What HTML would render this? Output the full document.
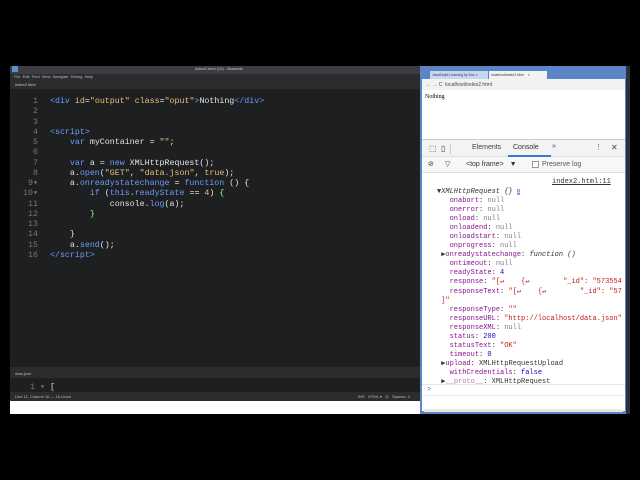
<!DOCTYPE html>
<html><head><style>
*{margin:0;padding:0;box-sizing:border-box}
body{width:640px;height:480px;background:#000;position:relative;overflow:hidden;font-family:"Liberation Sans",sans-serif}
.a{position:absolute}
.code{font-family:"Liberation Mono",monospace;font-size:8.3px;line-height:10.27px;white-space:pre;color:#e4e4e4}
.ln{color:#777;text-align:right;width:28px}
.t{color:#6c9ef8}.s{color:#e6c07b}.k{color:#6c9ef8}.v{color:#ddd}
.con{font-family:"Liberation Mono",monospace;font-size:7px;line-height:9.05px;white-space:pre;color:#333}
.p{color:#881391}.n{color:#808080}.st{color:#c41a16}.nu{color:#1c00cf}
</style></head><body>
<!-- editor -->
<div class="a" style="left:10px;top:66px;width:412px;height:8px;background:#3b3d40"></div>
<div class="a" style="left:12px;top:66px;width:6px;height:6px;background:#5a8fd0"></div>
<div class="a" style="left:195px;top:66px;font-size:4px;color:#ccc">index2.html (13) - Brackets</div>
<div class="a" style="left:10px;top:74px;width:412px;height:7px;background:#2b2c2e;font-size:4px;color:#bbb;padding-left:4px;line-height:6px">File&nbsp; Edit&nbsp; Find&nbsp; View&nbsp; Navigate&nbsp; Debug&nbsp; Help</div>
<div class="a" style="left:10px;top:81px;width:412px;height:8px;background:#2b2c2e;font-size:4px;color:#ccc;padding-left:5px;line-height:7px">index2.html</div>
<div class="a" style="left:10px;top:89px;width:412px;height:278px;background:#1d1f21"></div>
<div class="a code ln" style="left:10px;top:97px">1
2
3
4
5
6
7
8
9▾
10▾
11
12
13
14
15
16</div>
<div class="a code" style="left:50px;top:97px"><span class="t">&lt;div</span> <span class="s">id</span>=<span class="s">"output"</span> <span class="s">class</span>=<span class="s">"oput"</span><span class="t">&gt;</span>Nothing<span class="t">&lt;/div&gt;</span>


<span class="t">&lt;script&gt;</span>
    <span class="k">var</span> myContainer = <span class="s">""</span>;

    <span class="k">var</span> a = <span class="k">new</span> XMLHttpRequest();
    a.<span class="k">open</span>(<span class="s">"GET"</span>, <span class="s">"data.json"</span>, <span class="s">true</span>);
    a.<span class="k">onreadystatechange</span> = <span class="k">function</span> () {
        <span class="k">if</span> (<span class="k">this</span>.<span class="k">readyState</span> == <span class="s">4</span>) <span style="color:#8f8">{</span>
            console.<span class="k">log</span>(a);
        <span style="color:#8f8">}</span>

    }
    a.<span class="k">send</span>();
<span class="t">&lt;/script&gt;</span></div>
<div class="a" style="left:10px;top:367px;width:412px;height:11px;background:#2b2c2e;font-size:4px;color:#bbb;padding:4px 0 0 5px">data.json</div>
<div class="a" style="left:10px;top:378px;width:412px;height:14px;background:#1d1f21"></div>
<div class="a code" style="left:30px;top:383px;color:#777">1 ▾ <span style="color:#ddd">[</span></div>
<div class="a" style="left:10px;top:392px;width:412px;height:9px;background:#2b2c2e;font-size:4px;color:#bbb;padding:2px 0 0 5px">Line 11, Column 10 — 16 Lines<span style="position:absolute;left:348px">INS&nbsp;&nbsp; HTML ▾&nbsp;&nbsp; ◎&nbsp;&nbsp; Spaces: 4</span></div>
<div class="a" style="left:10px;top:401px;width:412px;height:13px;background:#fff"></div>
<!-- chrome -->
<div class="a" style="left:420px;top:66px;width:207px;height:348px;background:#5a86c8"></div>
<div class="a" style="left:626px;top:66px;width:4px;height:348px;background:#2a2f38"></div>
<div class="a" style="left:430px;top:71px;width:58px;height:8px;background:#c6d7ef;font-size:3.5px;color:#334;padding:2px">JavaScript Learning by Doc ×</div>
<div class="a" style="left:489px;top:71px;width:58px;height:8px;background:#f2f2f2;font-size:3.5px;color:#334;padding:2px">localhost/index2.html &nbsp;&nbsp; ×</div>
<div class="a" style="left:422px;top:79px;width:203px;height:11px;background:#f2f2f2;font-size:5px;color:#444;padding:3px 0 0 4px">← → C &nbsp;localhost/index2.html</div>
<div class="a" style="left:422px;top:90px;width:203px;height:49px;background:#fff;font-family:'Liberation Serif',serif;font-size:6px;padding:4px 3px">Nothing</div>
<div class="a" style="left:422px;top:139px;width:203px;height:18px;background:#f3f3f3;border-top:1px solid #ccc;border-bottom:1px solid #ddd;font-size:7px;color:#444">
 <span class="a" style="left:28px;top:4px;width:1px;height:10px;background:#ccc"></span>
 <span class="a" style="left:7px;top:4px;font-size:8px">⬚</span><span class="a" style="left:19px;top:4px;font-size:8px">▯</span>
 <span class="a" style="left:50px;top:4px">Elements</span><span class="a" style="left:91px;top:4px;color:#333">Console</span>
 <span class="a" style="left:86px;top:15px;width:43px;height:2px;background:#3879d9"></span>
 <span class="a" style="left:130px;top:3px">»</span><span class="a" style="left:173px;top:3px">⋮</span><span class="a" style="left:189px;top:3px;font-size:8px">✕</span></div>
<div class="a" style="left:422px;top:157px;width:203px;height:16px;background:#f7f7f7;border-bottom:1px solid #ddd;font-size:7px;color:#333">
 <span class="a" style="left:6px;top:3px">⊘</span><span class="a" style="left:23px;top:3px">▽</span>
 <span class="a" style="left:44px;top:4px">&lt;top frame&gt;&nbsp;&nbsp; ▼</span>
 <span class="a" style="left:110px;top:4px;width:7px;height:7px;border:1px solid #999;background:#fff"></span>
 <span class="a" style="left:120px;top:4px;color:#555">Preserve log</span></div>
<div class="a" style="left:422px;top:173px;width:203px;height:222px;background:#fff;overflow:hidden">
 <div class="a con" style="left:130px;top:5px;text-decoration:underline">index2.html:11</div>
 <div class="a con" style="left:15px;top:15px"><span style="font-style:italic">▼XMLHttpRequest {}</span> <span style="background:#7aa6e6;color:#fff;font-size:5px">i</span>
   <span class="p">onabort</span>: <span class="n">null</span>
   <span class="p">onerror</span>: <span class="n">null</span>
   <span class="p">onload</span>: <span class="n">null</span>
   <span class="p">onloadend</span>: <span class="n">null</span>
   <span class="p">onloadstart</span>: <span class="n">null</span>
   <span class="p">onprogress</span>: <span class="n">null</span>
 ▶<span class="p">onreadystatechange</span>: <i>function ()</i>
   <span class="p">ontimeout</span>: <span class="n">null</span>
   <span class="p">readyState</span>: <span class="nu">4</span>
   <span class="p">response</span>: <span class="st">"[↵    {↵        "_id": "573554</span>
   <span class="p">responseText</span>: <span class="st">"[↵    {↵        "_id": "57</span>
 <span class="st">]"</span>
   <span class="p">responseType</span>: <span class="st">""</span>
   <span class="p">responseURL</span>: <span class="st">"http://localhost/data.json"</span>
   <span class="p">responseXML</span>: <span class="n">null</span>
   <span class="p">status</span>: <span class="nu">200</span>
   <span class="p">statusText</span>: <span class="st">"OK"</span>
   <span class="p">timeout</span>: <span class="nu">0</span>
 ▶<span class="p">upload</span>: XMLHttpRequestUpload
   <span class="p">withCredentials</span>: <span class="nu">false</span>
 ▶<span class="p" style="opacity:.6">__proto__</span>: XMLHttpRequest</div>
 <div class="a" style="left:0;top:211px;width:203px;height:1px;background:#e5e5e5"></div>
 <div class="a con" style="left:5px;top:213px;color:#3879d9">&gt;</div>
</div>
<div class="a" style="left:422px;top:395px;width:203px;height:16px;background:#fff;border-top:1px solid #eee"></div>
<div class="a" style="left:424px;top:409px;width:199px;height:3px;background:#e8e8e8"></div>
</body></html>
